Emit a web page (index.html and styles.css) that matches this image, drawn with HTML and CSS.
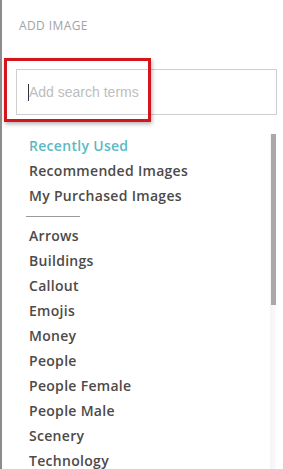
FILE: index.html
```html
<!DOCTYPE html>
<html>
<head>
<meta charset="utf-8">
<link rel="stylesheet" href="styles.css">
</head>
<body>
<div class="panel">
  <div class="title">ADD IMAGE</div>
  <div class="search-wrap">
    <div class="search"><span class="caret"></span><span class="placeholder">Add search terms</span></div>
    <div class="highlight"></div>
  </div>
  <div class="list-area">
    <ul class="list">
      <li class="active">Recently Used</li>
      <li>Recommended Images</li>
      <li>My Purchased Images</li>
      <li class="divider"></li>
      <li>Arrows</li>
      <li>Buildings</li>
      <li>Callout</li>
      <li>Emojis</li>
      <li>Money</li>
      <li>People</li>
      <li>People Female</li>
      <li>People Male</li>
      <li>Scenery</li>
      <li>Technology</li>
    </ul>
    <div class="scrollbar"><div class="thumb"></div></div>
  </div>
</div>
</body>
</html>
```
FILE: styles.css
```css
html, body {
  margin: 0;
  padding: 0;
  background: #fff;
}
.panel {
  height: 469px;
  overflow: hidden;
  border-left: 2px solid #8c8c8c;
  box-sizing: border-box;
  font-family: "Open Sans", Lato, sans-serif;
}
.title {
  padding: 19px 0 0 17px;
  font-size: 12px;
  line-height: 14px;
  color: #a3a3a3;
  letter-spacing: 0.4px;
}
.search-wrap {
  position: relative;
  padding: 36px 0 0 14px;
}
.search {
  height: 44px;
  border: 1px solid #cfcfcf;
  display: flex;
  align-items: center;
  padding-left: 11px;
  box-sizing: content-box;
  width: 248px;
}
.caret {
  width: 1px;
  height: 17px;
  background: #333;
}
.placeholder {
  font-family: "Liberation Sans", Arial, sans-serif;
  font-size: 14px;
  color: #bdbdbd;
}
.highlight {
  position: absolute;
  left: 2px;
  top: 25px;
  width: 141px;
  height: 58px;
  border: 3px solid #d3161c;
  box-shadow: 1px 2px 4px rgba(0,0,0,0.3);
}
.list-area {
  display: flex;
  margin-top: 19px;
}
.list {
  list-style: none;
  margin: -1px 0 0 0;
  padding: 0 0 0 27px;
  flex: 1;
}
.list li {
  font-size: 14px;
  line-height: 25px;
  height: 25px;
  font-weight: 600;
  color: #4d4a48;
  white-space: nowrap;
  letter-spacing: 0.3px;
}
.list li.active {
  color: #5cb9c3;
}
.list li.divider {
  height: 1px;
  width: 54px;
  margin: 8px 0 6px -3px;
  background: #9a9a9a;
}
.scrollbar {
  width: 6px;
  margin-right: 7px;
  background: linear-gradient(to right, #f4f4f4, #fafafa);
  height: 335px;
}
.thumb {
  margin-left: 1px;
  width: 5px;
  height: 171px;
  background: #a9a9a9;
}
```
